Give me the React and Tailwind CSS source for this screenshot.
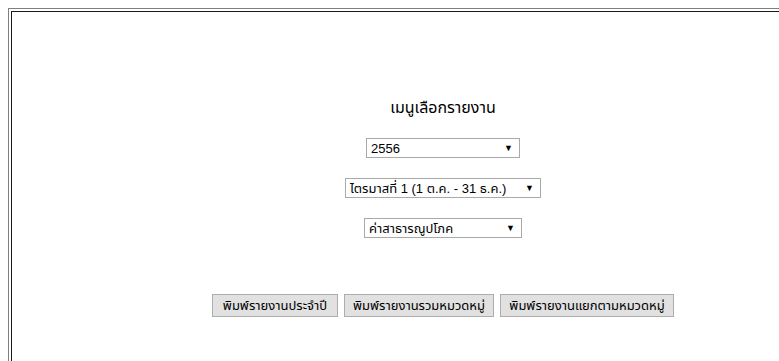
import React from 'react';

const font = { fontFamily: "'Liberation Sans', Tahoma, 'Noto Sans Thai', 'DejaVu Sans', sans-serif" };

// Old-style drop-down box, drawn with divs
const Dropdown = ({ value, width }) => (
  <div
    className={`flex items-center justify-between h-[20px] border border-[#a9a9a9] bg-white pl-[4px] pr-[6px] text-[13px] leading-none text-black ${width}`}
  >
    <span className="whitespace-nowrap">{value}</span>
    <span className="text-[9px] leading-none">▼</span>
  </div>
);

const PrintButton = ({ label, width }) => (
  <button
    type="button"
    className={`h-[23px] border border-[#adadad] bg-[#e1e1e1] px-[6px] text-[13px] leading-none text-black whitespace-nowrap ${width}`}
  >
    {label}
  </button>
);

export default function App() {
  return (
    <div className="h-[361px] w-full overflow-hidden bg-white" style={font}>
      <div className="ml-[8px] mt-[8px] w-[870px] border border-[#808080] p-[2px]">
        <div className="h-[400px] border border-[#1a1a1a] flex flex-col items-center pt-[87px]">
          <h1 className="text-[16px] leading-[18px] text-black">เมนูเลือกรายงาน</h1>

          <div className="mt-[21px] flex flex-col items-center gap-[20px]">
            <Dropdown value="2556" width="w-[154px]" />
            <Dropdown value="ไตรมาสที่ 1 (1 ต.ค. - 31 ธ.ค.)" width="w-[196px]" />
            <Dropdown value="ค่าสาธารณูปโภค" width="w-[158px]" />
          </div>

          <div className="mt-[56px] flex items-center gap-[6px]">
            <PrintButton label="พิมพ์รายงานประจำปี" width="w-[126px]" />
            <PrintButton label="พิมพ์รายงานรวมหมวดหมู่" width="w-[150px]" />
            <PrintButton label="พิมพ์รายงานแยกตามหมวดหมู่" width="w-[174px]" />
          </div>
        </div>
      </div>
    </div>
  );
}
